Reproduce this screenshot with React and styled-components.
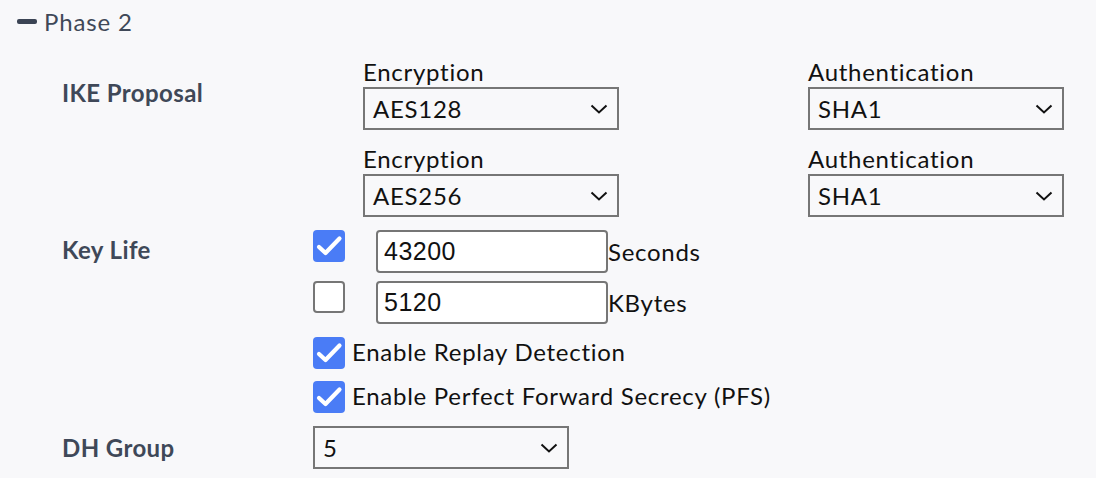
import React from "react";
import styled, { createGlobalStyle } from "styled-components";

const Global = createGlobalStyle`
  html, body { margin: 0; padding: 0; background: #f8f8fa; }
  body { font-family: Lato, "Noto Sans", sans-serif; color: #111; letter-spacing: 0.72px; }
`;

const Page = styled.div`
  width: 1096px;
  height: 478px;
  box-sizing: border-box;
  padding: 7px 0 0 17px;
  overflow: hidden;
`;

const Header = styled.div`
  display: flex;
  align-items: center;
  gap: 7px;
  font-size: 24px;
  line-height: 29px;
  color: #3f4858;
  letter-spacing: 0.85px;
`;

const Minus = styled.span`
  display: block;
  width: 20px;
  height: 5px;
  border-radius: 2px;
  background: #3b4454;
`;

const Form = styled.div`
  display: grid;
  grid-template-columns: 251px 1fr;
  row-gap: 13px;
  margin: 22px 0 0 45px;
`;

const Label = styled.div`
  font-weight: 700;
  font-size: 24px;
  line-height: 29px;
  letter-spacing: 0.4px;
  color: #3f4858;
  padding-top: ${(p) => p.$pt || 0}px;
  align-self: ${(p) => (p.$center ? "center" : "start")};
`;

const Proposals = styled.div`
  display: grid;
  grid-template-columns: 445px 256px;
  row-gap: 15px;
  margin-left: 50px;
`;

const Field = styled.div`
  display: flex;
  flex-direction: column;
`;

const FieldLabel = styled.div`
  font-size: 24px;
  line-height: 27px;
  margin-bottom: 2px;
  color: #111;
`;

const SelectBox = styled.div`
  box-sizing: border-box;
  width: 256px;
  height: 43px;
  border: 2px solid #767676;
  display: flex;
  align-items: center;
  justify-content: space-between;
  padding: 0 9px 0 8px;
  font-size: 24px;
  color: #111;
`;

const Stack = styled.div`
  display: flex;
  flex-direction: column;
  gap: ${(p) => p.$gap}px;
`;

const LineRow = styled.div`
  display: flex;
  align-items: ${(p) => (p.$center ? "center" : "flex-start")};
  gap: ${(p) => p.$gap || 0}px;
  font-size: 24px;
  color: #111;
`;

const OptionText = styled.span`
  padding-bottom: 3px;
`;

const Box = styled.span`
  box-sizing: border-box;
  flex: none;
  width: 32px;
  height: 32px;
  border-radius: 4px;
  display: flex;
  align-items: center;
  justify-content: center;
  background: ${(p) => (p.$checked ? "#4a7cf6" : "#fff")};
  border: ${(p) => (p.$checked ? "none" : "2px solid #767676")};
`;

const TextInput = styled.input`
  box-sizing: border-box;
  width: 232px;
  height: 43px;
  margin-left: 31px;
  border: 2px solid #767676;
  border-radius: 4px;
  background: #fff;
  padding: 0 6px;
  font-family: "Liberation Sans", Arial, sans-serif;
  font-size: 25px;
  letter-spacing: 0.5px;
  color: #111;
  outline: none;
`;

const Unit = styled.span`
  font-size: 24px;
  line-height: 43px;
  color: #111;
`;

const Chevron = () => (
  <svg width="18" height="10" viewBox="0 0 18 10" fill="none">
    <path d="M1.5 1.5 L9 8.5 L16.5 1.5" stroke="#111" strokeWidth="2" />
  </svg>
);

const Select = ({ value }) => (
  <SelectBox>
    <span>{value}</span>
    <Chevron />
  </SelectBox>
);

const Checkbox = ({ checked }) => (
  <Box $checked={checked}>
    {checked && (
      <svg width="32" height="32" viewBox="0 0 32 32">
        <path
          d="M6 17 L12.5 23 L26.5 8.5"
          fill="none"
          stroke="#fff"
          strokeWidth="4.2"
          strokeLinecap="round"
          strokeLinejoin="round"
        />
      </svg>
    )}
  </Box>
);

export default function App() {
  return (
    <>
      <Global />
      <Page>
        <Header>
          <Minus />
          Phase 2
        </Header>
        <Form>
          <Label $pt={20}>IKE Proposal</Label>
          <Proposals>
            <Field>
              <FieldLabel>Encryption</FieldLabel>
              <Select value="AES128" />
            </Field>
            <Field>
              <FieldLabel>Authentication</FieldLabel>
              <Select value="SHA1" />
            </Field>
            <Field>
              <FieldLabel>Encryption</FieldLabel>
              <Select value="AES256" />
            </Field>
            <Field>
              <FieldLabel>Authentication</FieldLabel>
              <Select value="SHA1" />
            </Field>
          </Proposals>

          <Label $pt={5}>Key Life</Label>
          <Stack $gap={8}>
            <LineRow>
              <Checkbox checked />
              <TextInput defaultValue="43200" />
              <Unit>Seconds</Unit>
            </LineRow>
            <LineRow>
              <Checkbox />
              <TextInput defaultValue="5120" />
              <Unit>KBytes</Unit>
            </LineRow>
          </Stack>

          <div />
          <Stack $gap={12}>
            <LineRow $center $gap={7}>
              <Checkbox checked />
              <OptionText>Enable Replay Detection</OptionText>
            </LineRow>
            <LineRow $center $gap={7}>
              <Checkbox checked />
              <OptionText>Enable Perfect Forward Secrecy (PFS)</OptionText>
            </LineRow>
          </Stack>

          <Label $center>DH Group</Label>
          <div>
            <Select value="5" />
          </div>
        </Form>
      </Page>
    </>
  );
}
